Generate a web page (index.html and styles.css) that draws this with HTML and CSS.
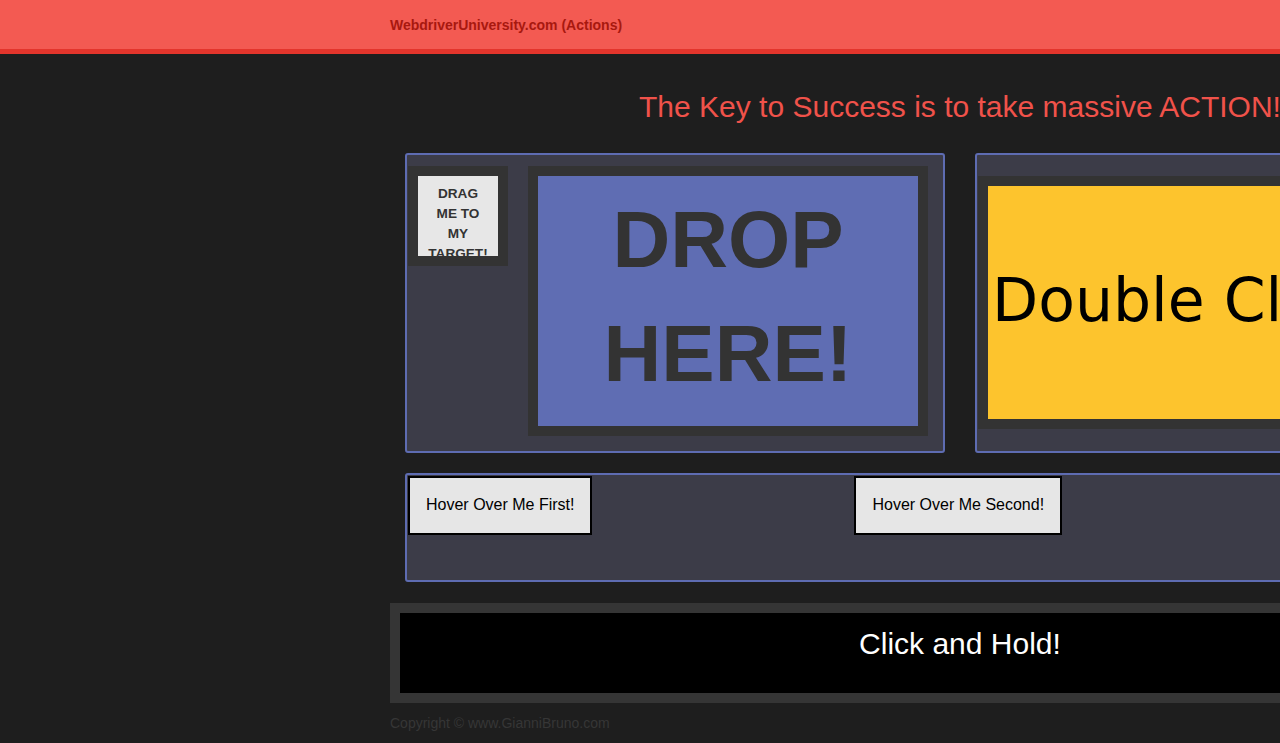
FILE: index.html
```html
<!DOCTYPE html>
<html lang="en">
<head>
<meta charset="utf-8">
<title>WebdriverUniversity.com (Actions)</title>
<link rel="stylesheet" href="styles.css">
</head>
<body>
<div class="page">
  <header class="header">
    <div class="header-inner">WebdriverUniversity.com (Actions)</div>
  </header>
  <main class="container">
    <h1 class="title">The Key to Success is to take massive ACTION!</h1>
    <div class="row">
      <section class="panel panel-drag">
        <div class="drag-wrap">
          <div class="draggable">DRAG ME TO MY TARGET!</div>
        </div>
        <div class="drop-wrap">
          <div class="droppable">DROP HERE!</div>
        </div>
      </section>
      <section class="panel panel-dbl">
        <div class="dbl-wrap">
          <div class="dbl">Double Click Me!</div>
        </div>
      </section>
    </div>
    <section class="hover-panel">
      <button class="hover-btn">Hover Over Me First!</button>
      <button class="hover-btn second">Hover Over Me Second!</button>
    </section>
    <div class="click-hold">
      <div class="click-hold-text">Click and Hold!</div>
    </div>
    <footer class="copyright">Copyright © www.GianniBruno.com</footer>
  </main>
</div>
</body>
</html>
```
FILE: styles.css
```css
html, body {
  margin: 0;
  padding: 0;
  overflow: hidden;
  background: #1e1e1e;
}

body {
  font-family: "Liberation Sans", Arial, sans-serif;
}

.page {
  width: 1920px;
}

.header {
  height: 49px;
  background: #f35a52;
  border-bottom: 5px solid #e3352c;
}

.header-inner {
  width: 1140px;
  margin: 0 auto;
  height: 100%;
  display: flex;
  align-items: center;
  font-size: 14px;
  font-weight: bold;
  color: #a8180f;
}

.container {
  width: 1140px;
  margin: 0 auto;
}

.title {
  margin: 36px 0 29px;
  text-align: center;
  font-size: 30px;
  font-weight: normal;
  line-height: 34px;
  color: #f0524a;
  white-space: nowrap;
}

.row {
  display: flex;
  gap: 30px;
  padding: 0 15px;
}

.panel {
  width: 540px;
  height: 300px;
  box-sizing: border-box;
  border: 2px solid #5e6cb2;
  border-radius: 3px;
  background: #3c3c48;
}

.panel-drag {
  display: flex;
  align-items: flex-start;
  gap: 20px;
  padding: 11px 0 0 1px;
}

.drag-wrap {
  width: 100px;
  height: 100px;
  box-sizing: border-box;
  padding: 10px;
  background: #333333;
}

.draggable {
  width: 80px;
  height: 80px;
  box-sizing: border-box;
  padding: 8px 9px 0;
  overflow: hidden;
  background: #e7e7e7;
  color: #333333;
  font-size: 13.6px;
  font-weight: bold;
  line-height: 20px;
  text-align: center;
}

.drop-wrap {
  width: 400px;
  height: 270px;
  box-sizing: border-box;
  padding: 10px;
  background: #333333;
}

.droppable {
  height: 100%;
  box-sizing: border-box;
  padding-top: 7px;
  background: #5f6db3;
  color: #333333;
  font-size: 80px;
  font-weight: bold;
  line-height: 1.42857;
  text-align: center;
}

.panel-dbl {
  padding: 21px 0 0 1px;
  overflow: hidden;
}

.dbl-wrap {
  width: 514px;
  height: 253px;
  box-sizing: border-box;
  padding: 10px;
  background: #333333;
}

.dbl {
  height: 100%;
  box-sizing: border-box;
  display: flex;
  align-items: center;
  padding: 0 0 6px 4px;
  background: #fdc42d;
  color: #000000;
  font-family: "DejaVu Sans", Verdana, sans-serif;
  font-size: 60px;
  white-space: nowrap;
  overflow: hidden;
}

.hover-panel {
  margin: 20px 15px 0;
  height: 109px;
  box-sizing: border-box;
  border: 2px solid #5e6cb2;
  border-radius: 3px;
  background: #3c3c48;
  padding: 1px;
  display: flex;
  align-items: flex-start;
}

.hover-btn {
  margin: 0;
  border: 2px solid #000000;
  border-radius: 0;
  background: #e6e6e6;
  color: #000000;
  font-family: "Liberation Sans", Arial, sans-serif;
  font-size: 16px;
  line-height: 19px;
  padding: 17px 16px 19px;
}

.hover-btn.second {
  margin-left: 262px;
}

.click-hold {
  margin-top: 21px;
  height: 100px;
  box-sizing: border-box;
  border: 10px solid #353535;
  background: #000000;
}

.click-hold-text {
  padding-top: 14px;
  text-align: center;
  color: #ffffff;
  font-size: 30px;
  line-height: normal;
}

.copyright {
  margin-top: 12px;
  font-size: 14px;
  color: #363636;
}
```
